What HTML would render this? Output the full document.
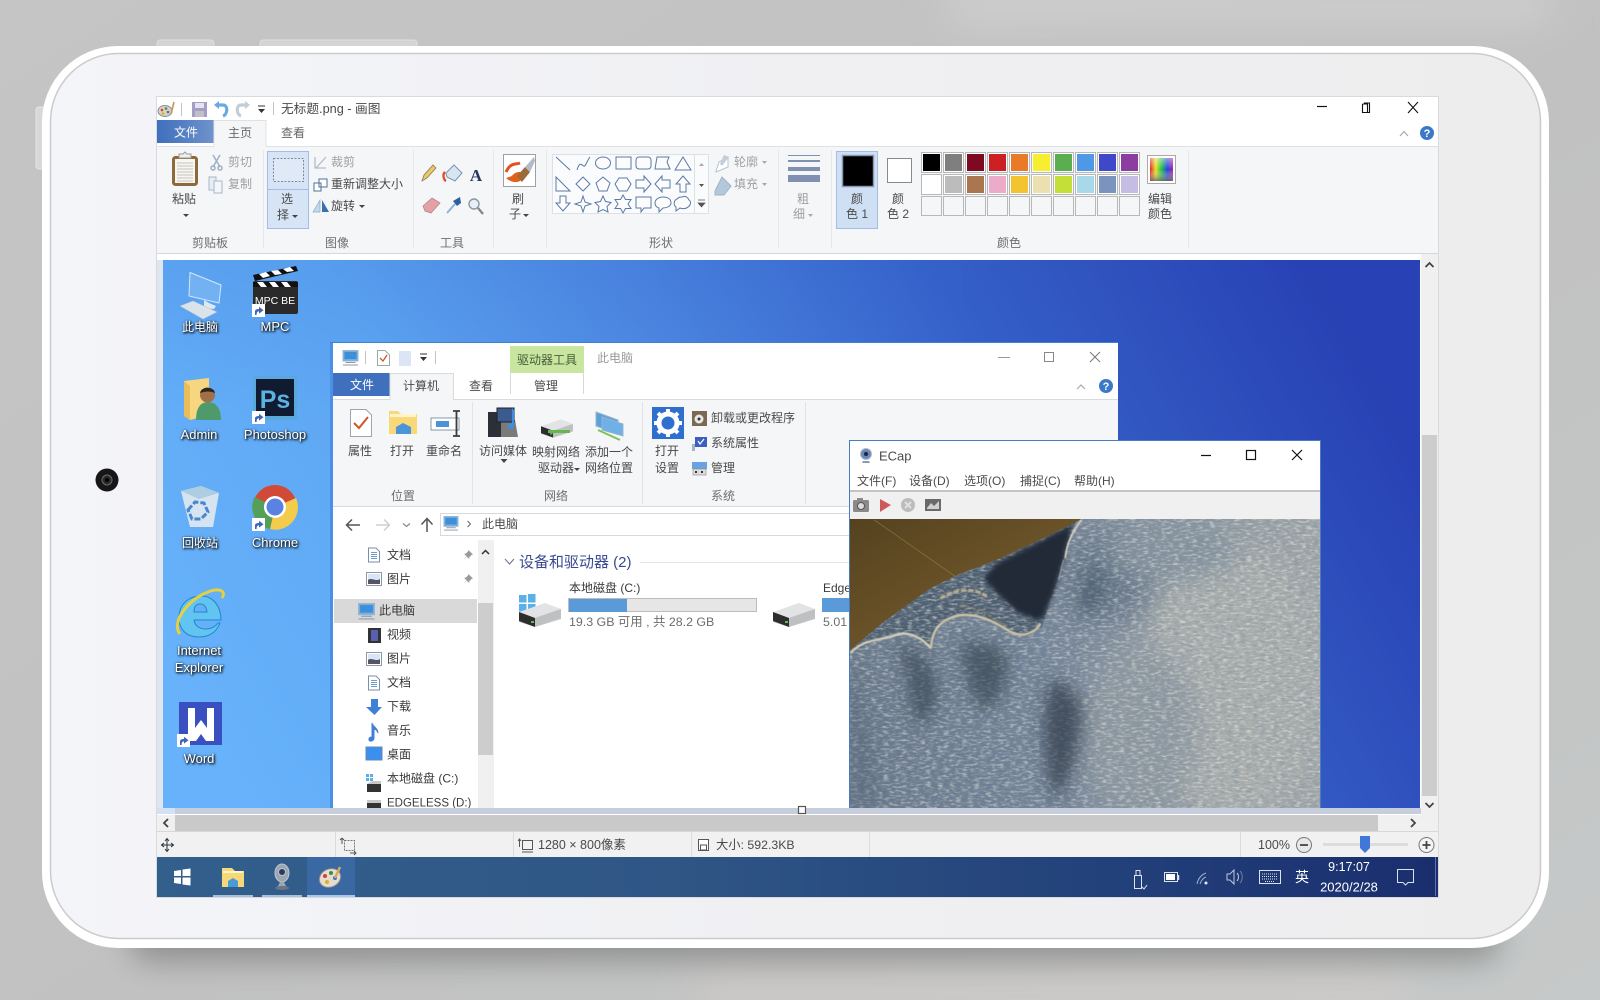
<!DOCTYPE html>
<html><head><meta charset="utf-8"><style>
html,body{margin:0;padding:0;background:#c4c4c4;width:1600px;height:1000px;overflow:hidden}
svg{display:block}
#root{filter:blur(.3px)}
text{font-family:"Liberation Sans","Noto Sans CJK SC",sans-serif;font-size:12px;fill:#4a4a4a;white-space:pre}
.c{text-anchor:middle}
.g{fill:#9a9a9a}
.w{fill:#fff}
.d{fill:#3a3a3a}
.shape path,.shape rect,.shape circle,.shape ellipse{fill:#fff;stroke:#5a7aa6;stroke-width:1;fill-opacity:.35}
.dl{filter:drop-shadow(1px 1px 1px #000) drop-shadow(0 0 1px rgba(0,0,0,.55))}
.dl text{font-size:13px}
.dl text.z{font-size:12px}
</style></head><body>
<svg id="root" width="1600" height="1000" viewBox="0 0 1600 1000" xmlns="http://www.w3.org/2000/svg">
<defs>
<linearGradient id="bg" x1="0" y1="0" x2="1" y2="1"><stop offset="0" stop-color="#c5c5c5"/><stop offset=".55" stop-color="#c1c1c1"/><stop offset="1" stop-color="#c6c9c9"/></linearGradient>
<linearGradient id="bt" x1="0" y1="0" x2="1" y2="0"><stop offset="0" stop-color="#f4f5f9"/><stop offset=".5" stop-color="#f0f0f3"/><stop offset="1" stop-color="#ededee"/></linearGradient>
<filter id="bl" x="-20%" y="-300%" width="140%" height="700%"><feGaussianBlur stdDeviation="15"/></filter>
<filter id="b3" x="-30%" y="-300%" width="160%" height="700%"><feGaussianBlur stdDeviation="20"/></filter>
<linearGradient id="wall" gradientUnits="userSpaceOnUse" x1="260" y1="830" x2="1300" y2="240"><stop offset="0" stop-color="#67b2fb"/><stop offset=".28" stop-color="#5da5f2"/><stop offset=".5" stop-color="#4c85e0"/><stop offset=".72" stop-color="#3560c8"/><stop offset="1" stop-color="#2841b4"/></linearGradient>
<linearGradient id="wallt" x1="0" y1="0" x2="0" y2="1"><stop offset="0" stop-color="#2f6ad0" stop-opacity=".14"/><stop offset="1" stop-color="#2f6ad0" stop-opacity="0"/></linearGradient>
<linearGradient id="task" x1="0" y1="0" x2="1" y2="0"><stop offset="0" stop-color="#335f8c"/><stop offset=".4" stop-color="#2f5685"/><stop offset=".75" stop-color="#22407a"/><stop offset="1" stop-color="#1a2e6e"/></linearGradient>
<linearGradient id="file1" x1="0" y1="0" x2="1" y2="0"><stop offset="0" stop-color="#3f6fbd"/><stop offset="1" stop-color="#6f93cc"/></linearGradient>
<linearGradient id="rb" x1="0" y1="0" x2="1" y2="0"><stop offset="0" stop-color="#e02020"/><stop offset=".25" stop-color="#e8e020"/><stop offset=".5" stop-color="#20c040"/><stop offset=".75" stop-color="#2040e0"/><stop offset="1" stop-color="#a020a0"/></linearGradient>
<linearGradient id="rb2" x1="0" y1="0" x2="0" y2="1"><stop offset="0" stop-color="#fff" stop-opacity=".5"/><stop offset=".5" stop-color="#fff" stop-opacity="0"/><stop offset="1" stop-color="#666" stop-opacity=".8"/></linearGradient>
<linearGradient id="den" x1="0" y1="0" x2="1" y2="0"><stop offset="0" stop-color="#687889"/><stop offset=".4" stop-color="#728297"/><stop offset=".7" stop-color="#8c97a0"/><stop offset="1" stop-color="#a0a6a8"/></linearGradient>
<linearGradient id="brn" x1="0" y1="0" x2="1" y2="1"><stop offset="0" stop-color="#54421f"/><stop offset=".5" stop-color="#6a5228"/><stop offset="1" stop-color="#5f4c30"/></linearGradient>
<filter id="n1" x="0" y="0" width="1" height="1"><feTurbulence type="fractalNoise" baseFrequency="0.055 0.15" numOctaves="2" seed="4"/><feColorMatrix values="0 0 0 0 .88 0 0 0 0 .87 0 0 0 0 .8 2.8 0 0 0 -1.3"/></filter>
<filter id="n2" x="0" y="0" width="1" height="1"><feTurbulence type="fractalNoise" baseFrequency="0.05 0.14" numOctaves="2" seed="9"/><feColorMatrix values="0 0 0 0 .22 0 0 0 0 .28 0 0 0 0 .36 2.8 0 0 0 -1.3"/></filter>
<filter id="f8" x="-60%" y="-60%" width="220%" height="220%"><feGaussianBlur stdDeviation="24"/></filter>
<filter id="f20" x="-50%" y="-50%" width="200%" height="200%"><feGaussianBlur stdDeviation="40"/></filter>
<filter id="f4" x="-30%" y="-30%" width="160%" height="160%"><feGaussianBlur stdDeviation="6"/></filter>
<filter id="f1"><feGaussianBlur stdDeviation="1.2"/></filter>
<clipPath id="cv"><rect x="163" y="260" width="1257" height="548"/></clipPath>
<clipPath id="ph"><rect x="28" y="268" width="1413" height="867"/></clipPath>
<symbol id="sc" viewBox="0 0 13 13"><rect width="13" height="13" fill="#fff"/><path d="M3 11V7.5C3 5.8 4.5 5 7 5V2.8L11.5 6.2 7 9.6V7.4C5.5 7.4 4.6 8.2 4.6 11Z" fill="#3f66b0"/></symbol>
<symbol id="pc" viewBox="0 0 16 16"><rect x="0.5" y="0.5" width="15" height="10.5" fill="#6db0ec" stroke="#9fb4c8"/><rect x="2" y="2" width="12" height="7" fill="#3d8fd8"/><rect x="3" y="12" width="10" height="1" fill="#8a9aab"/><rect x="0.5" y="14.5" width="15" height="1" fill="#8a9aab"/></symbol>
<symbol id="drv" viewBox="0 0 42 24"><path d="M0 11 26 1 42 8V16L16 24 0 19Z" fill="#c2c4c6"/><path d="M0 9 26 0 42 6 16 15Z" fill="#e2e3e4"/><path d="M0 9 16 15V24L0 18Z" fill="#2d2d2d"/><path d="M16 15 42 6V14L16 24Z" fill="#bfc0c2"/><rect x="12" y="18" width="3" height="2" fill="#5bc04e"/></symbol>
<symbol id="img" viewBox="0 0 16 14"><rect x=".5" y=".5" width="15" height="13" fill="#fff" stroke="#8a97a8"/><rect x="2" y="2" width="12" height="10" fill="#d6e6f2"/><path d="M2 8C5 5 10 10 14 7V12H2Z" fill="#556"/></symbol>
<symbol id="doc" viewBox="0 0 12 15"><path d="M.5.5H8L11.5 4V14.5H.5Z" fill="#fff" stroke="#7d8ea5"/><path d="M3 5H9M3 7H9M3 9H9M3 11H9" stroke="#6aa0d0"/></symbol>
<symbol id="pin" viewBox="0 0 10 10"><path d="M5.5 0 10 4.5 8.5 5 6.5 7 6 9 3.8 6.5 .8 9.5 3.5 6 1 4 3 3.500 5 1.5Z" fill="#9a9a9a"/></symbol>
</defs>

<rect width="1600" height="1000" fill="url(#bg)"/>
<rect x="950" y="-10" width="600" height="30" fill="#d2d2d2" filter="url(#b3)"/>
<rect x="700" y="975" width="700" height="30" fill="#d0cbc8" filter="url(#b3)"/>
<!-- hardware buttons -->
<rect x="157" y="40" width="57" height="14" rx="3" fill="#d4d4d6" stroke="#dedee0"/>
<rect x="260" y="40" width="157" height="14" rx="3" fill="#d4d4d6" stroke="#dedee0"/>
<rect x="36" y="107" width="12" height="62" rx="3" fill="#d8d8da" stroke="#e4e4e6"/>
<!-- shadow -->
<rect x="130" y="915" width="1370" height="46" rx="20" fill="#000" opacity=".26" filter="url(#bl)"/>
<!-- body -->
<rect x="42" y="46" width="1507" height="902" rx="76" fill="#fff"/>
<rect x="50.500" y="53.500" width="1490" height="885" rx="68" fill="url(#bt)" stroke="#cbcbcd" stroke-width="1.500"/>
<!-- camera -->
<circle cx="107" cy="480" r="11.500" fill="#161616"/><circle cx="107" cy="480" r="5" fill="#2a2a2a" stroke="#6a6a6a"/><circle cx="107" cy="480" r="2" fill="#000"/>

<!-- PAINT WINDOW -->
<rect x="156.500" y="96.500" width="1282" height="801" fill="#fff" stroke="#d9dadc"/>
<!-- QAT -->
<g>
<ellipse cx="165" cy="111" rx="7" ry="5.500" fill="#d9d2c2" stroke="#7f90a8"/>
<circle cx="162" cy="110" r="1.300" fill="#d94030"/><circle cx="166" cy="108.500" r="1.300" fill="#3d8f40"/><circle cx="168" cy="112" r="1.300" fill="#3a70c8"/><circle cx="163" cy="113.500" r="1.300" fill="#e0b020"/>
<path d="M171 114 174 102" stroke="#c89850" stroke-width="1.600"/>
<path d="M181.500 103V116M273.500 102V115" stroke="#c4c4c4"/>
<rect x="192" y="102" width="15" height="15" fill="#a69cc8"/><rect x="195" y="103" width="9" height="5" fill="#e4e4ea"/><rect x="195" y="111" width="9" height="6" fill="#c0c0c8"/>
<path d="M216 105H223C228 105 228 114 223 116" fill="none" stroke="#68abe4" stroke-width="3.200"/><path d="M214 105 219 101V109Z" fill="#68abe4"/>
<path d="M248 105H241C236 105 236 114 241 116" fill="none" stroke="#c4ccd4" stroke-width="3.200"/><path d="M250 105 245 101V109Z" fill="#c4ccd4"/>
<path d="M258 106H265" stroke="#333"/><path d="M258 109H265L261.500 113Z" fill="#333"/>
</g>
<text x="281" y="113" style="font-size:12.700px">无标题.png - 画图</text>
<!-- ctrl -->
<path d="M1317 106.500H1327" stroke="#111" stroke-width="1.200"/>
<path d="M1362.500 104V112.500H1369.500V103H1364.500V104.500M1362.500 104H1367.500V112.500" fill="none" stroke="#111" stroke-width="1.100"/>
<path d="M1408 102 1418 113M1418 102 1408 113" stroke="#111" stroke-width="1.100"/>
<path d="M1400 136 1404 131.500 1408 136" fill="none" stroke="#aaa" stroke-width="1.200"/>
<circle cx="1427" cy="133" r="7" fill="#3b78c8"/><text x="1427" y="137" class="c w" style="font-size:11px;font-weight:bold">?</text>
<!-- tabs -->
<rect x="157" y="120" width="57" height="23" fill="url(#file1)"/>
<text x="186" y="136.500" class="c w">文件</text>
<rect x="157" y="146" width="1281" height="108" fill="#f5f6f7"/>
<path d="M157 146.500H214V120.500H266V146.500H1438" fill="#f5f6f7" stroke="#e0e1e3"/>
<rect x="214.500" y="121" width="51" height="26" fill="#f5f6f7"/>
<text x="240" y="137" class="c" style="fill:#6a6a6a">主页</text>
<text x="293" y="137" class="c" style="fill:#666">查看</text>
<!-- ribbon separators -->
<path d="M263.500 150V248M413.500 150V248M493.500 150V248M546.500 150V248M778.500 150V248M831.500 150V248M1188.500 150V248" stroke="#e6e7e9"/>
<path d="M157 253.500H1438" stroke="#d6d7d9"/>
<!-- clipboard -->
<rect x="173.500" y="157.500" width="23" height="27" rx="2" fill="#f8f6f0" stroke="#8d6a3c" stroke-width="3"/>
<path d="M177 163H193M177 166H193M177 169H193M177 172H193M177 175H193M177 178H193M177 181H193" stroke="#c4c4c4"/>
<path d="M179 158H191V154H187L185 152 183 154H179Z" fill="#efefef" stroke="#999"/>
<text x="184" y="203" class="c">粘贴</text>
<path d="M183 214H189L186 217Z" fill="#444"/>
<g stroke="#a0b0c4" fill="none" stroke-width="1.500"><path d="M213 155 220 167M220 155 213 167"/><circle cx="213" cy="168" r="2"/><circle cx="220" cy="168" r="2"/></g>
<text x="240" y="166" class="c" style="fill:#a0a0a0">剪切</text>
<path d="M209 177H216V190H209Z" fill="#e8edf2" stroke="#a8b8ca"/><path d="M214 181H222V193H214Z" fill="#f4f6f8" stroke="#a8b8ca"/>
<text x="240" y="188" class="c" style="fill:#a0a0a0">复制</text>
<rect x="267.500" y="151.500" width="41" height="77" fill="#d6e4f5" stroke="#a3bde3"/><path d="M268 189.500H308" stroke="#a3bde3"/>
<rect x="273.500" y="158.500" width="30" height="23" fill="#e0eaf7" stroke="#7a8aa0" stroke-dasharray="2 1.500"/>
<text x="287" y="203" class="c">选</text><text x="283" y="219" class="c">择</text><path d="M292 215H298L295 218Z" fill="#444"/>
<path d="M315 157V168H326M316 168 326 157" fill="none" stroke="#b0bccc" stroke-width="1.300"/>
<text x="331" y="166" style="fill:#a0a0a0">裁剪</text>
<path d="M319 179H327V187H319ZM314 183H321V191H314Z" fill="#fff" stroke="#50709a"/>
<text x="331" y="188">重新调整大小</text>
<path d="M320 200V212H313Z" fill="#c4d8ec" stroke="#8aa8c8" stroke-width=".7"/><path d="M322 200V212H329Z" fill="#3a70b0"/>
<text x="331" y="210">旋转</text><path d="M359 205H365L362 208Z" fill="#444"/>
<!-- tools -->
<path d="M422 181 424 175 433 165 436 168 427 178Z" fill="#e8c86a" stroke="#8a7a50" stroke-width=".8"/>
<path d="M446 173 454 165 462 173 455 181 447 177Z" fill="#d8e6f2" stroke="#7a94b4"/><path d="M445 172C442 175 444 180 446 181" fill="none" stroke="#e05030" stroke-width="2.400"/>
<text x="476" y="181" class="c" style="font-family:'Liberation Serif',serif;font-size:17px;font-weight:bold;fill:#26395c">A</text>
<path d="M423 206 432 198 440 203 431 213 425 211Z" fill="#e4a0a4" stroke="#b08888" stroke-width=".8"/>
<path d="M447 213 455 204" stroke="#8fb0d8" stroke-width="2"/><path d="M453 201 460 197 461 203 457 206Z" fill="#2d5f9e"/>
<circle cx="474" cy="204" r="5" fill="#e8eff6" stroke="#8a98a6" stroke-width="1.400"/><path d="M478 208 483 214" stroke="#888" stroke-width="2.400"/>
<!-- brush -->
<rect x="503.500" y="154.500" width="32" height="32" fill="#fff" stroke="#9aa2a9"/>
<path d="M506 172C511 162 515 165 520 163" fill="none" stroke="#e0521e" stroke-width="3"/><path d="M506 178C512 184 522 184 526 174 522 170 514 172 512 176Z" fill="#e0601e"/>
<path d="M517 176 525 167 530 172 522 182Z" fill="#9a6a3a"/><path d="M525 167 534 157 535 161 530 172Z" fill="#b0bcc8"/>
<text x="518" y="203" class="c">刷</text><text x="515" y="218" class="c">子</text><path d="M523 214H529L526 217Z" fill="#444"/>
<!-- shapes -->
<rect x="552.500" y="154.500" width="156" height="59" fill="#fafbfc" stroke="#dde1e6"/><path d="M694.500 155V213" stroke="#dde1e6"/>
<path d="M699 166 701.500 163 704 166Z" fill="#aaa"/><path d="M699 184H704L701.500 187Z" fill="#555"/><path d="M698 200H705M698 203H705L701.500 207Z" fill="#555" stroke="#555" stroke-width=".7"/>
<g class="shape">
<path d="M556 157 570 170" style="fill:none"/>
<path d="M577 170C581 157 583 171 586 164 588 160 589 158 590 157" style="fill:none"/>
<ellipse cx="603" cy="163" rx="7.500" ry="6"/>
<rect x="616" y="157" width="15" height="12"/>
<rect x="636" y="157" width="15" height="12" rx="3"/>
<path d="M657 157H669L667 162 670 169H655Z"/>
<path d="M683 157 691 170H675Z"/>
<path d="M556 177V191H570Z"/>
<path d="M583 177 590 184 583 191 576 184Z"/>
<path d="M603 177 610 183 607 191H599L596 183Z"/>
<path d="M619 178H627L631 184 627 191H619L615 184Z"/>
<path d="M636 180H644V176L651 184 644 192V188H636Z"/>
<path d="M670 180H662V176L655 184 662 192V188H670Z"/>
<path d="M683 176 690 184H686V192H680V184H676Z"/>
<path d="M560 196H566V203H570L563 211 556 203H560Z"/>
<path d="M583 196 585 202 591 204 585 206 583 212 581 206 575 204 581 202Z"/>
<path d="M603 196 605.500 201.500 611 202.500 607 206.500 608 212 603 209.500 598 212 599 206.500 595 202.500 600.500 201.500Z"/>
<path d="M623 195 625.500 199.500 631 199.500 628 204 631 208.500 625.500 208.500 623 213 620.500 208.500 615 208.500 618 204 615 199.500 620.500 199.500Z"/>
<path d="M636 197H651V208H644L641 212V208H636Z"/>
<path d="M663 197C669 197 671 200 671 203 671 206 667 208 663 208L659 212V208C656 207 655 205 655 203 655 200 658 197 663 197Z"/>
<path d="M682 197C686 195 688 198 689 200 692 202 690 206 688 207 686 209 682 209 680 208L676 211V207C673 205 674 200 677 199 679 197 680 197 682 197Z"/>
</g>
<!-- outline/fill -->
<path d="M716 171 719 162 728 157V167L716 172Z" fill="#fff" stroke="#b8c2d0"/><path d="M724 155 729 157 722 166 720 164Z" fill="#c4ced8"/>
<text x="734" y="166" style="fill:#a0a0a0">轮廓</text><path d="M762 161H767L764.500 164Z" fill="#aaa"/>
<path d="M722 177 731 186 724 195H715V191Z" fill="#b4c8dc" stroke="#a0b4c8"/>
<text x="734" y="188" style="fill:#a0a0a0">填充</text><path d="M762 183H767L764.500 186Z" fill="#aaa"/>
<!-- size -->
<g fill="#7f90b0"><rect x="788" y="155" width="32" height="1"/><rect x="788" y="160" width="32" height="2"/><rect x="788" y="167" width="32" height="4"/><rect x="788" y="175" width="32" height="7"/></g>
<text x="803" y="203" class="c" style="fill:#a0a0a0">粗</text><text x="799" y="218" class="c" style="fill:#a0a0a0">细</text><path d="M808 214H813L810.500 217Z" fill="#aaa"/>
<!-- color1/2 -->
<rect x="836.500" y="151.500" width="41" height="77" fill="#cfe0f4" stroke="#a3bde3"/>
<rect x="842.500" y="155.500" width="31" height="31" fill="#000" stroke="#8a9aae" stroke-width="1.500"/>
<text x="857" y="203" class="c">颜</text><text x="857" y="218" class="c">色 1</text>
<rect x="887.500" y="158.500" width="24" height="24" fill="#fff" stroke="#8a8a8a"/>
<text x="898" y="203" class="c">颜</text><text x="898" y="218" class="c">色 2</text>
<!-- palette -->
<g stroke="#b8b8b8" stroke-width="1">
<rect x="921.500" y="152.500" width="20" height="20" fill="#fff"/><rect x="943.500" y="152.500" width="20" height="20" fill="#fff"/><rect x="965.500" y="152.500" width="20" height="20" fill="#fff"/><rect x="987.500" y="152.500" width="20" height="20" fill="#fff"/><rect x="1009.500" y="152.500" width="20" height="20" fill="#fff"/><rect x="1031.500" y="152.500" width="20" height="20" fill="#fff"/><rect x="1053.500" y="152.500" width="20" height="20" fill="#fff"/><rect x="1075.500" y="152.500" width="20" height="20" fill="#fff"/><rect x="1097.500" y="152.500" width="20" height="20" fill="#fff"/><rect x="1119.500" y="152.500" width="20" height="20" fill="#fff"/>
<rect x="921.500" y="174.500" width="20" height="20" fill="#fff"/><rect x="943.500" y="174.500" width="20" height="20" fill="#fff"/><rect x="965.500" y="174.500" width="20" height="20" fill="#fff"/><rect x="987.500" y="174.500" width="20" height="20" fill="#fff"/><rect x="1009.500" y="174.500" width="20" height="20" fill="#fff"/><rect x="1031.500" y="174.500" width="20" height="20" fill="#fff"/><rect x="1053.500" y="174.500" width="20" height="20" fill="#fff"/><rect x="1075.500" y="174.500" width="20" height="20" fill="#fff"/><rect x="1097.500" y="174.500" width="20" height="20" fill="#fff"/><rect x="1119.500" y="174.500" width="20" height="20" fill="#fff"/>
<rect x="921.500" y="196.500" width="20" height="19" fill="#f5f6f7"/><rect x="943.500" y="196.500" width="20" height="19" fill="#f5f6f7"/><rect x="965.500" y="196.500" width="20" height="19" fill="#f5f6f7"/><rect x="987.500" y="196.500" width="20" height="19" fill="#f5f6f7"/><rect x="1009.500" y="196.500" width="20" height="19" fill="#f5f6f7"/><rect x="1031.500" y="196.500" width="20" height="19" fill="#f5f6f7"/><rect x="1053.500" y="196.500" width="20" height="19" fill="#f5f6f7"/><rect x="1075.500" y="196.500" width="20" height="19" fill="#f5f6f7"/><rect x="1097.500" y="196.500" width="20" height="19" fill="#f5f6f7"/><rect x="1119.500" y="196.500" width="20" height="19" fill="#f5f6f7"/>
</g>
<rect x="923" y="154" width="17" height="17" fill="#000"/><rect x="945" y="154" width="17" height="17" fill="#7f7f7f"/><rect x="967" y="154" width="17" height="17" fill="#7d0a20"/><rect x="989" y="154" width="17" height="17" fill="#cc2024"/><rect x="1011" y="154" width="17" height="17" fill="#e87a28"/><rect x="1033" y="154" width="17" height="17" fill="#f8ee30"/><rect x="1055" y="154" width="17" height="17" fill="#5aae50"/><rect x="1077" y="154" width="17" height="17" fill="#4e98e6"/><rect x="1099" y="154" width="17" height="17" fill="#3f48c8"/><rect x="1121" y="154" width="17" height="17" fill="#8c3ea0"/>
<rect x="923" y="176" width="17" height="17" fill="#fff"/><rect x="945" y="176" width="17" height="17" fill="#bcbcbc"/><rect x="967" y="176" width="17" height="17" fill="#a97650"/><rect x="989" y="176" width="17" height="17" fill="#ecabc8"/><rect x="1011" y="176" width="17" height="17" fill="#f4c430"/><rect x="1033" y="176" width="17" height="17" fill="#ece0b0"/><rect x="1055" y="176" width="17" height="17" fill="#c4e038"/><rect x="1077" y="176" width="17" height="17" fill="#a8d8ea"/><rect x="1099" y="176" width="17" height="17" fill="#7a94be"/><rect x="1121" y="176" width="17" height="17" fill="#c5bde3"/>
<rect x="1147.500" y="155.500" width="28" height="28" fill="#fff" stroke="#aaa"/><rect x="1150" y="158" width="23" height="23" fill="url(#rb)"/><rect x="1150" y="158" width="23" height="23" fill="url(#rb2)"/>
<text x="1160" y="203" class="c">编辑</text><text x="1160" y="218" class="c">颜色</text>
<text x="210" y="247" class="c" style="fill:#6e6e6e">剪贴板</text><text x="337" y="247" class="c" style="fill:#6e6e6e">图像</text><text x="452" y="247" class="c" style="fill:#6e6e6e">工具</text><text x="661" y="247" class="c" style="fill:#6e6e6e">形状</text><text x="1009" y="247" class="c" style="fill:#6e6e6e">颜色</text>

<!-- canvas surround -->
<rect x="157" y="254" width="1265" height="560" fill="#ffffff"/>
<rect x="157" y="260" width="6" height="554" fill="#dfe6f0"/>
<rect x="163" y="808" width="1259" height="6" fill="#c6cede"/>
<rect x="157" y="808" width="18" height="6" fill="#d3e1f5"/>

<g clip-path="url(#cv)">
<rect x="163" y="260" width="1257" height="548" fill="url(#wall)"/>
<rect x="163" y="260" width="800" height="150" fill="url(#wallt)"/>
<!-- desktop icons -->
<path d="M190 272.500 221 285 219 303 189 296Z" fill="#a9d3f5" fill-opacity=".3" stroke="#d4e6f7"/>
<path d="M204 300V308L214 309 216 306 209 303Z" fill="#dfe8f0"/>
<path d="M180 306 193 301 217 312 203 319Z" fill="#dbe3ea" stroke="#b8c4d0" stroke-width=".5"/>
<rect x="253" y="281" width="45" height="33" rx="2" fill="#2a2a2a"/>
<path d="M253 275 296 266 298 271 255 281Z" fill="#111"/>
<path d="M259 274 266 272 270 276 263 278ZM271 271 278 270 282 274 275 275ZM283 269 290 267 294 271 287 272Z" fill="#fff"/>
<path d="M253 282H298V287H253Z" fill="#111"/><path d="M257 282 263 282 267 287 261 287ZM269 282 275 282 279 287 273 287ZM281 282 287 282 291 287 285 287Z" fill="#fff"/>
<text x="275" y="304" class="c w" style="font-size:10.500px">MPC BE</text>
<use href="#sc" x="252" y="304" width="13" height="13"/>
<path d="M184 381 209 378V415L190 420 184 416Z" fill="#f6d67f"/><path d="M184 381 190 386V420L184 416Z" fill="#e9bd5a"/>
<path d="M196 420C196 406 202 402 208 402S221 406 221 420Z" fill="#4f9a6a"/>
<circle cx="207.500" cy="395" r="7.500" fill="#a07048"/><path d="M200 393C201 386 214 386 215 393 210 391 206 391 200 393Z" fill="#2d2620"/>
<rect x="253" y="376" width="44" height="44" fill="#59a8dc"/><rect x="256" y="379" width="38" height="37" fill="#101a30"/>
<text x="275" y="408" class="c" style="font-size:25px;font-weight:bold;fill:#5bb1e0">Ps</text>
<use href="#sc" x="252" y="411" width="13" height="13"/>
<path d="M181 491 201 486 219 493 213 527 190 527Z" fill="#d5e4f0"/><path d="M181 491 201 486 219 493 199 499Z" fill="#aecde0"/><path d="M188 510 195 502 204 503 208 512 201 519H192Z" fill="none" stroke="#4a86d0" stroke-width="3" stroke-dasharray="6 2"/>
<circle cx="275" cy="507" r="22" fill="#d14a38"/>
<path d="M275 507 254.500 497A22.500 22.500 0 0 0 270 529Z" fill="#54a05a"/>
<path d="M275 507 270 529A22.500 22.500 0 0 0 296 498Z" fill="#f2cc4a"/>
<circle cx="275" cy="507" r="11" fill="#fff"/><circle cx="275" cy="507" r="8.500" fill="#5a82e0"/>
<use href="#sc" x="252" y="518" width="13" height="13"/>
<path d="M179 618C179 603 190 596 201 596C213 596 221 606 221 620H194C195 627 201 629 206 629C211 629 215 627 218 623H220C216 633 208 637 199 637C187 637 179 630 179 618ZM194 612H207C206 606 204 604 200 604C196 604 194 607 194 612Z" fill="#62c4f0" fill-rule="evenodd" stroke="#1f86cc"/>
<path d="M180 634C170 622 190 598 208 592 218 588 227 590 222 598" fill="none" stroke="#e6d040" stroke-width="3"/>
<rect x="179" y="702" width="43" height="43" fill="#3a50c0"/><path d="M188 708H195V728L201 720 207 728V708H214V741H206L201 734 196 741H188Z" fill="#fff"/>
<use href="#sc" x="177" y="734" width="13" height="13"/>
<g class="dl">
<text x="200" y="331" class="c w z">此电脑</text><text x="275" y="331" class="c w">MPC</text>
<text x="199" y="439" class="c w">Admin</text><text x="275" y="439" class="c w">Photoshop</text>
<text x="200" y="547" class="c w z">回收站</text><text x="275" y="547" class="c w">Chrome</text>
<text x="199" y="655" class="c w">Internet</text><text x="199" y="672" class="c w">Explorer</text>
<text x="199" y="763" class="c w">Word</text>
</g>

<!-- EXPLORER -->
<rect x="330" y="342" width="788" height="471" fill="#fff"/>
<rect x="330" y="342" width="3" height="471" fill="#4b8fe6"/>
<rect x="330" y="342" width="788" height="1" fill="#3e7fd8"/>
<use href="#pc" x="342" y="350" width="17" height="16"/>
<path d="M365.500 351V364M435.500 351V364" stroke="#c4c4c4"/>
<path d="M377.500 350.500H385L389.500 355V365.500H377.500Z" fill="#fff" stroke="#9aa"/><path d="M380 358 383 361 387 355" fill="none" stroke="#d0542a" stroke-width="1.300"/>
<rect x="399" y="351" width="12" height="15" fill="#dbe5f5"/>
<path d="M420 354H427" stroke="#333"/><path d="M420 357H427L423.500 361Z" fill="#333"/>
<rect x="510" y="346" width="74" height="27" fill="#c8e6a0"/>
<text x="547" y="364" class="c" style="fill:#4a5a3a">驱动器工具</text>
<text x="615" y="362" class="c" style="fill:#9a9a9a">此电脑</text>
<path d="M998 357.500H1010" stroke="#999"/><rect x="1044.500" y="352.500" width="9" height="9" fill="none" stroke="#888"/><path d="M1090 352 1100 362M1100 352 1090 362" stroke="#777"/>
<path d="M1077 389 1081 385 1085 389" fill="none" stroke="#aaa" stroke-width="1.200"/>
<circle cx="1106" cy="386" r="7" fill="#3b78c8"/><text x="1106" y="390" class="c w" style="font-size:11px;font-weight:bold">?</text>
<rect x="333" y="400" width="785" height="107" fill="#f5f6f7"/>
<path d="M333 399.500H1118" stroke="#dadbdc"/>
<rect x="333" y="373" width="57" height="23" fill="#3f70bd"/>
<text x="362" y="389" class="c w">文件</text>
<path d="M390 400V373.500H453.500V400" fill="#f5f6f7" stroke="#dadbdc"/>
<rect x="391" y="396" width="62" height="5" fill="#f5f6f7"/>
<text x="421" y="390" class="c">计算机</text>
<text x="481" y="390" class="c">查看</text>
<path d="M510.500 373V394M583.500 373V394" stroke="#d6d8dc"/>
<text x="546" y="390" class="c">管理</text>
<path d="M472.500 402V504M642.500 402V504M805.500 402V504" stroke="#e2e3e5"/>
<path d="M333 506.500H1118" stroke="#dadbdc"/>
<!-- ribbon icons -->
<path d="M350.500 409.500H366L371.500 415V436.500H350.500Z" fill="#fff" stroke="#9aa6b0"/><path d="M354 423 359 428 368 417" fill="none" stroke="#d0542a" stroke-width="2"/>
<text x="360" y="455" class="c">属性</text>
<path d="M389 411H398L401 414H417V434H389Z" fill="#f8d878"/><rect x="390" y="414" width="26" height="3" fill="#fff3c8"/><path d="M396 434V427L403 423 411 427V434Z" fill="#4a94d8"/>
<text x="402" y="455" class="c">打开</text>
<rect x="431" y="418" width="28" height="12" fill="#fff" stroke="#8a97a8"/><rect x="436" y="421" width="13" height="6" fill="#4a94d8"/>
<path d="M453 411H460M456.500 411V436M453 436H460" stroke="#3c3c3c" stroke-width="1.800"/>
<text x="444" y="455" class="c">重命名</text>
<rect x="488" y="412" width="13" height="25" fill="#2a2f38"/><path d="M501 420H515L518 437H501Z" fill="#7a7a7a"/><rect x="497" y="408" width="17" height="14" fill="#3a5a90" stroke="#222"/><path d="M514 410V426C514 430 508 430 508 426 508 423 511 423 512 424V408Z" fill="#3a8fe0"/>
<text x="503" y="455" class="c">访问媒体</text><path d="M500.500 459H507.500L504 463Z" fill="#444"/>
<use href="#drv" x="541" y="419" width="32" height="19"/>
<rect x="548" y="430" width="22" height="3" fill="#66b84e"/>
<text x="556" y="456" class="c">映射网络</text><text x="556" y="472" class="c">驱动器</text><path d="M574 468H580L577 471Z" fill="#444"/>
<path d="M596 412 618 420V434L596 426Z" fill="#5aa0dc" stroke="#9ab4cc"/><path d="M602 417 623 424V436L602 430Z" fill="#6fb0e6" stroke="#9ab4cc"/><path d="M598 430 620 440" stroke="#7cc25a" stroke-width="2"/>
<text x="609" y="456" class="c">添加一个</text><text x="609" y="472" class="c">网络位置</text>
<rect x="652" y="407" width="32" height="32" fill="#2f6fd0"/>
<circle cx="668" cy="423" r="9" fill="none" stroke="#fff" stroke-width="5"/>
<path d="M668 409V414M668 432V437M654 423H659M677 423H682M658 413 662 417M674 429 678 433M678 413 674 417M662 429 658 433" stroke="#fff" stroke-width="4"/>
<text x="667" y="455" class="c">打开</text><text x="667" y="472" class="c">设置</text>
<rect x="692" y="411" width="15" height="15" fill="#7a6a50"/><circle cx="699" cy="419" r="4.500" fill="#e8e8e8"/><circle cx="699" cy="419" r="1.500" fill="#333"/>
<text x="711" y="422">卸载或更改程序</text>
<rect x="695" y="437" width="12" height="10" fill="#3a5fc0"/><path d="M698 441 700 444 704 439" fill="none" stroke="#fff" stroke-width="1.200"/><rect x="692" y="444" width="3" height="7" fill="#aab4c0"/>
<text x="711" y="447">系统属性</text>
<rect x="692" y="462" width="15" height="7" fill="#6aa4e0"/><rect x="693" y="469" width="13" height="6" fill="#ddd" stroke="#888" stroke-width=".6"/><rect x="695" y="471" width="2" height="2" fill="#333"/><rect x="701" y="471" width="2" height="2" fill="#333"/>
<text x="711" y="472">管理</text>
<text x="403" y="500" class="c" style="fill:#6e6e6e">位置</text><text x="556" y="500" class="c" style="fill:#6e6e6e">网络</text><text x="723" y="500" class="c" style="fill:#6e6e6e">系统</text>
<!-- nav -->
<path d="M360 525H347M352 519.500 346.500 525 352 530.500" fill="none" stroke="#555" stroke-width="1.500"/>
<path d="M376 525H389M384 519.500 389.500 525 384 530.500" fill="none" stroke="#cfcfcf" stroke-width="1.500"/>
<path d="M403 523.500 406.500 526.500 410 523.500" fill="none" stroke="#888" stroke-width="1.200"/>
<path d="M427 532V519M421.500 524.500 427 518.500 432.500 524.500" fill="none" stroke="#555" stroke-width="1.500"/>
<rect x="440.500" y="513.500" width="440" height="22" fill="#fff" stroke="#d9d9d9"/>
<use href="#pc" x="443" y="516" width="16" height="15"/>
<path d="M467.500 521 470.500 524 467.500 527" fill="none" stroke="#666"/>
<text x="482" y="528">此电脑</text>
<!-- sidebar -->
<rect x="478" y="540" width="16" height="268" fill="#f0f0f0"/>
<rect x="478" y="603" width="15" height="152" fill="#cdcdcd"/>
<path d="M482 554 485.500 550.500 489 554" fill="none" stroke="#333" stroke-width="1.500"/>
<rect x="334" y="599" width="143" height="24" fill="#d9d9d9"/>
<use href="#doc" x="368" y="547" width="12" height="16"/>
<text x="387" y="559" class="d">文档</text><use href="#pin" x="463" y="550" width="10" height="10"/>
<use href="#img" x="366" y="572" width="16" height="14"/>
<text x="387" y="583" class="d">图片</text><use href="#pin" x="463" y="574" width="10" height="10"/>
<use href="#pc" x="358" y="603" width="17" height="17"/>
<text x="379" y="614.500" class="d">此电脑</text>
<rect x="368" y="628" width="13" height="15" fill="#333"/><rect x="371" y="630" width="7" height="11" fill="#5a60b0"/>
<text x="387" y="638.500" class="d">视频</text>
<use href="#img" x="366" y="652" width="16" height="14"/>
<text x="387" y="662.500" class="d">图片</text>
<use href="#doc" x="368" y="675" width="12" height="16"/>
<text x="387" y="686.500" class="d">文档</text>
<path d="M371 699H378V707H382L374.500 715 366 707H371Z" fill="#3f7fd8"/>
<text x="387" y="710.500" class="d">下载</text>
<path d="M372 737V723C373 727 378 728 378 733 377 730 375 729 374 729V738C374 742 368 742 369 739 369 737 371 737 372 737Z" fill="#3f7fd8" stroke="#3f7fd8"/>
<text x="387" y="734.500" class="d">音乐</text>
<rect x="366" y="747" width="16" height="13" fill="#3a8ff0" stroke="#6a8ab0"/>
<text x="387" y="758.500" class="d">桌面</text>
<rect x="366" y="774" width="3" height="3" fill="#5ab0e8"/><rect x="370" y="774" width="3" height="3" fill="#5ab0e8"/><rect x="366" y="778" width="3" height="3" fill="#5ab0e8"/><rect x="370" y="778" width="3" height="3" fill="#5ab0e8"/>
<path d="M367 784H381V792H367Z" fill="#333"/><path d="M372 781H381V784H367Z" fill="#c8c8c8"/>
<text x="387" y="782.500" class="d">本地磁盘 (C:)</text>
<path d="M367 803H381V812H367Z" fill="#333"/><rect x="367" y="800" width="14" height="3" fill="#c8c8c8"/>
<text x="387" y="806.500" class="d" style="font-size:11.500px">EDGELESS (D:)</text>
<!-- content -->
<path d="M505 559 509.500 564 514 559" fill="none" stroke="#6a7890" stroke-width="1.100"/>
<text x="519" y="567" style="font-size:15px;fill:#3a4a90">设备和驱动器 (2)</text>
<path d="M640 562.500H850" stroke="#e5e5e5"/>
<g fill="#5ab0e8"><rect x="519" y="595" width="7.500" height="7.500"/><rect x="528" y="594" width="7.500" height="8.500"/><rect x="519" y="604" width="7.500" height="7.500"/><rect x="528" y="604" width="7.500" height="8.500"/></g>
<use href="#drv" x="519" y="603" width="42" height="24"/>
<text x="569" y="592" class="d">本地磁盘 (C:)</text>
<rect x="568.500" y="598.500" width="188" height="13" fill="#e6e6e6" stroke="#bcbcbc"/><rect x="569" y="599" width="58" height="13" fill="#5a9ad8"/>
<text x="569" y="626" style="fill:#6d6d6d;font-size:12.400px">19.3 GB 可用 , 共 28.2 GB</text>
<use href="#drv" x="773" y="603" width="42" height="24"/>
<text x="823" y="592" class="d">EdgeLess</text>
<rect x="822" y="598" width="60" height="14" fill="#5a9ad8"/>
<text x="823" y="626" style="fill:#6d6d6d;font-size:12.400px">5.01 GB</text>

<!-- ECAP -->
<rect x="849" y="440" width="472" height="370" fill="#fff"/>
<path d="M849.500 810V440.500H1320.500V810" fill="none" stroke="#4a7ac0"/>
<circle cx="866" cy="454" r="5.500" fill="#6a88b8" stroke="#b0bccc"/><circle cx="866" cy="454" r="2" fill="#224"/><path d="M863 461H869L870 463H862Z" fill="#8a9ab0"/>
<text x="879" y="460.500" style="font-size:13px">ECap</text>
<path d="M1201 455.500H1211" stroke="#111" stroke-width="1.200"/>
<rect x="1246.500" y="450.500" width="9" height="9" fill="none" stroke="#111" stroke-width="1.200"/>
<path d="M1292 450 1302 460M1302 450 1292 460" stroke="#111" stroke-width="1.200"/>
<text x="857" y="485">文件(F)</text><text x="909" y="485">设备(D)</text><text x="964" y="485">选项(O)</text><text x="1020" y="485">捕捉(C)</text><text x="1074" y="485">帮助(H)</text>
<rect x="850" y="490" width="470" height="2" fill="#c4c4c4"/>
<rect x="850" y="492" width="470" height="27" fill="#f0f0f0"/>
<rect x="853" y="500" width="16" height="12" rx="1.500" fill="#8a8a8a"/><circle cx="861" cy="506" r="3.500" fill="#dcdcdc" stroke="#555"/><rect x="857" y="498" width="6" height="2" fill="#8a8a8a"/>
<path d="M880 499 891 505 880 512Z" fill="#cc5a5a"/>
<circle cx="908" cy="505" r="7" fill="#bcbcbc"/><path d="M905 502 911 508M911 502 905 508" stroke="#e0e0e0" stroke-width="2"/>
<rect x="925" y="499" width="16" height="12" fill="#6a6a6a"/><path d="M927 508 931 503 934 506 939 501V509H927Z" fill="#d0d0d0"/>

<!-- denim photo -->
<svg x="850" y="519" width="470" height="290" viewBox="28 268 1413 867" preserveAspectRatio="none">
<g clip-path="url(#ph)">
<rect x="28" y="268" width="1413" height="867" fill="url(#den)"/>
<ellipse cx="1180" cy="760" rx="280" ry="420" fill="#a8adac" filter="url(#f20)"/>
<ellipse cx="900" cy="900" rx="170" ry="260" fill="#8d98a0" filter="url(#f20)"/>
<ellipse cx="800" cy="440" rx="130" ry="130" fill="#667788" filter="url(#f20)"/>
<ellipse cx="1000" cy="360" rx="200" ry="90" fill="#84929e" filter="url(#f20)"/>
<!-- upper band -->
<path d="M30 668 32 657 127 577 267 477 347 437 477 387 627 317 707 277 680 340 665 420 640 480 605 590 560 620 500 600 420 560 340 555 285 590 272 655 200 605 150 610Z" fill="#4e5f70"/>
<rect x="28" y="268" width="1413" height="867" filter="url(#n1)" opacity=".55"/>
<rect x="28" y="268" width="1413" height="867" filter="url(#n2)" opacity=".55"/>
<!-- soft folds over noise -->
<g filter="url(#f8)">
<path d="M170 640C240 650 290 720 290 790 280 870 240 910 215 850 210 770 195 700 170 640Z" fill="#2d3a4a" opacity=".6"/>
<path d="M360 640C450 630 520 650 500 740 480 810 455 850 415 830 385 780 370 720 360 640Z" fill="#2e3a4a" opacity=".6"/>
<path d="M630 750C690 755 730 800 725 880 715 960 685 1070 645 1110 610 1010 600 860 630 750Z" fill="#26323f" opacity=".65"/>
<path d="M770 400C810 430 800 520 730 570 695 520 730 450 770 400Z" fill="#3a4a5c" opacity=".5"/>
<path d="M28 720C70 760 100 900 110 1135H28Z" fill="#56667a" opacity=".5"/>
</g>
<path d="M470 400 627 320 695 285 668 400 640 490 610 560 590 572 530 545 470 490 430 445Z" fill="#222c38" filter="url(#f4)"/>
<!-- brown background -->
<path d="M28 268H725L707 277 627 317 477 387 347 437 267 477 127 577 32 657 28 662Z" fill="url(#brn)"/>
<path d="M100 270 345 440" stroke="#a08a40" stroke-width="2" opacity=".7"/>
<!-- hem stitches -->
<g filter="url(#f1)">
<path d="M30 668C70 625 130 630 165 615 210 600 250 630 272 655" fill="none" stroke="#d4cfba" stroke-width="7"/>
<path d="M272 650C275 590 310 565 360 555 420 550 470 580 510 605 550 625 590 605 600 580" fill="none" stroke="#cbc3a6" stroke-width="7"/>
<path d="M300 505C340 480 400 470 440 500" fill="none" stroke="#b8ae90" stroke-width="9" stroke-dasharray="16 6"/>
<path d="M360 525 420 540 500 590" fill="none" stroke="#8a8468" stroke-width="5" stroke-dasharray="10 8"/>
<path d="M725 270C700 300 680 340 675 385" fill="none" stroke="#d8d4c4" stroke-width="5"/>
<path d="M670 390 655 450" fill="none" stroke="#aab0b4" stroke-width="3"/>
</g>
</g>
</svg>
</g>
<rect x="798.500" y="806.500" width="7" height="7" fill="#fff" stroke="#555" stroke-width="1.200"/>

<!-- paint scrollbars -->
<rect x="1421" y="254" width="17" height="577" fill="#f0f0f0"/>
<rect x="1422" y="435" width="15" height="361" fill="#cdcdcd"/>
<path d="M1425.500 267 1429.500 263 1433.500 267" fill="none" stroke="#444" stroke-width="1.800"/>
<path d="M1425.500 803 1429.500 807 1433.500 803" fill="none" stroke="#444" stroke-width="1.800"/>
<rect x="157" y="815" width="1264" height="16" fill="#f0f0f0"/>
<rect x="175" y="815" width="1203" height="16" fill="#c9c9c9"/>
<path d="M168 819 164 823 168 827" fill="none" stroke="#444" stroke-width="1.800"/>
<path d="M1411 819 1415 823 1411 827" fill="none" stroke="#444" stroke-width="1.800"/>
<!-- status -->
<rect x="157" y="832" width="1281" height="25" fill="#f1f1f1"/><path d="M157 831.500H1438" stroke="#d8d8d8"/>
<path d="M335.500 832V857M513.500 832V857M691.500 832V857M869.500 832V857M1240.500 832V857" stroke="#dcdcdc"/>
<path d="M167 839V851M162 845H173M165 841 167 838.500 169 841M165 849 167 851.500 169 849M164 843 161.500 845 164 847M171 843 173.500 845 171 847" fill="none" stroke="#2a3040"/>
<rect x="344.500" y="840.500" width="10" height="10" fill="none" stroke="#777" stroke-dasharray="2 1"/><path d="M342 838V844M342 838 340 840M342 838 344 840M350 853H356M354 851 356 853 354 855" fill="none" stroke="#555"/>
<rect x="522.500" y="840.500" width="10" height="9" fill="none" stroke="#555"/><path d="M519.500 839V847M518 841 519.500 839 521 841M522 852H533" fill="none" stroke="#555"/>
<text x="538" y="849" style="font-size:12.500px">1280 × 800像素</text>
<rect x="698.500" y="839.500" width="10" height="11" fill="#fff" stroke="#555"/><rect x="700.500" y="845" width="6" height="5" fill="none" stroke="#555"/>
<text x="716" y="849" style="font-size:12.300px">大小: 592.3KB</text>
<text x="1258" y="849" style="font-size:12.500px">100%</text>
<circle cx="1304" cy="845" r="7.500" fill="#e8e8e8" stroke="#777"/><path d="M1300 845H1308" stroke="#444" stroke-width="1.800"/>
<rect x="1323" y="843" width="85" height="3" fill="#dcdcdc"/>
<path d="M1360 836H1370V848L1365 853 1360 848Z" fill="#3f78d8"/>
<circle cx="1426.500" cy="845" r="7.500" fill="#f4f4f4" stroke="#777"/><path d="M1422.500 845H1430.500M1426.500 841V849" stroke="#444" stroke-width="1.800"/>

<!-- taskbar -->
<rect x="157" y="857" width="1281" height="40" fill="url(#task)"/>
<rect x="307" y="857" width="48" height="40" fill="#3a68a2"/>
<rect x="213" y="895" width="40" height="2" fill="#a8c0dc"/><rect x="262" y="895" width="40" height="2" fill="#a8c0dc"/><rect x="307" y="895" width="48" height="2" fill="#a8c8e8"/>
<path d="M174 871 181 870V876H174ZM182.500 869.500 190.500 868.500V876H182.500ZM174 877.500H181V884L174 883ZM182.500 877.500H190.500V885.500L182.500 884.500Z" fill="#fff"/>
<path d="M222 868H232L235 871H244V887H222Z" fill="#f6d878"/><rect x="223" y="871" width="20" height="2" fill="#fff3c8"/><path d="M228 887V881L233 878 238 881V887Z" fill="#4a9ad8"/>
<ellipse cx="282" cy="873" rx="7" ry="9" fill="#9aa6b4" stroke="#c0c8d0"/><circle cx="282" cy="872" r="3.500" fill="#2a3a60" stroke="#b8c4d0"/><path d="M280 882H284L287 888H277Z" fill="#9aa6b4"/><ellipse cx="282" cy="888" rx="7" ry="2" fill="#6a7484"/>
<ellipse cx="330" cy="878" rx="11" ry="9" fill="#e4ddd0" stroke="#8a8a8a" transform="rotate(-25 330 878)"/>
<circle cx="325" cy="876" r="2" fill="#d94030"/><circle cx="331" cy="873" r="2" fill="#3d8f40"/><circle cx="335" cy="878" r="2" fill="#3a70c8"/><circle cx="327" cy="882" r="2" fill="#e0b020"/>
<path d="M335 878 340 867" stroke="#d8a860" stroke-width="2.500"/>
<!-- tray -->
<g fill="none" stroke="#dce2ec">
<rect x="1134.500" y="875.500" width="7" height="13"/><rect x="1136" y="870.500" width="4" height="5"/>
<path d="M1142 887 1144 889 1147 885" stroke-width="1"/>
<rect x="1164.500" y="872.500" width="13" height="9"/><path d="M1178.500 875V880" stroke-width="1.500"/>
<path d="M1197 884C1198 879 1201 875 1206 873M1200 884C1201 881 1203 878 1206 877" stroke-opacity=".7"/>
<path d="M1227 874H1230L1234 870V884L1230 880H1227ZM1237 873C1239 875 1239 879 1237 881" stroke-opacity=".85"/>
<path d="M1240 871C1243 874 1243 880 1240 883" stroke-opacity=".4"/>
<rect x="1259.500" y="870.500" width="21" height="13"/>
<path d="M1262 874H1278M1262 876.500H1278M1262 879H1278M1265 881.500H1275" stroke-dasharray="1 1"/>
<path d="M1397.500 869.500H1413.500V882.500H1408L1405.500 885 1403 882.500H1397.500Z"/>
</g>
<circle cx="1206" cy="883" r="1.500" fill="#e4e8f0"/><rect x="1166" y="874" width="9" height="6" fill="#fff"/>
<text x="1302" y="882" class="c w" style="font-size:14px">英</text>
<text x="1349" y="871" class="c w" style="font-size:12.500px">9:17:07</text>
<text x="1349" y="891.500" class="c w" style="font-size:13px">2020/2/28</text>
<path d="M1435.500 857V896" stroke="#5878a8"/>
</svg>
</body></html>
